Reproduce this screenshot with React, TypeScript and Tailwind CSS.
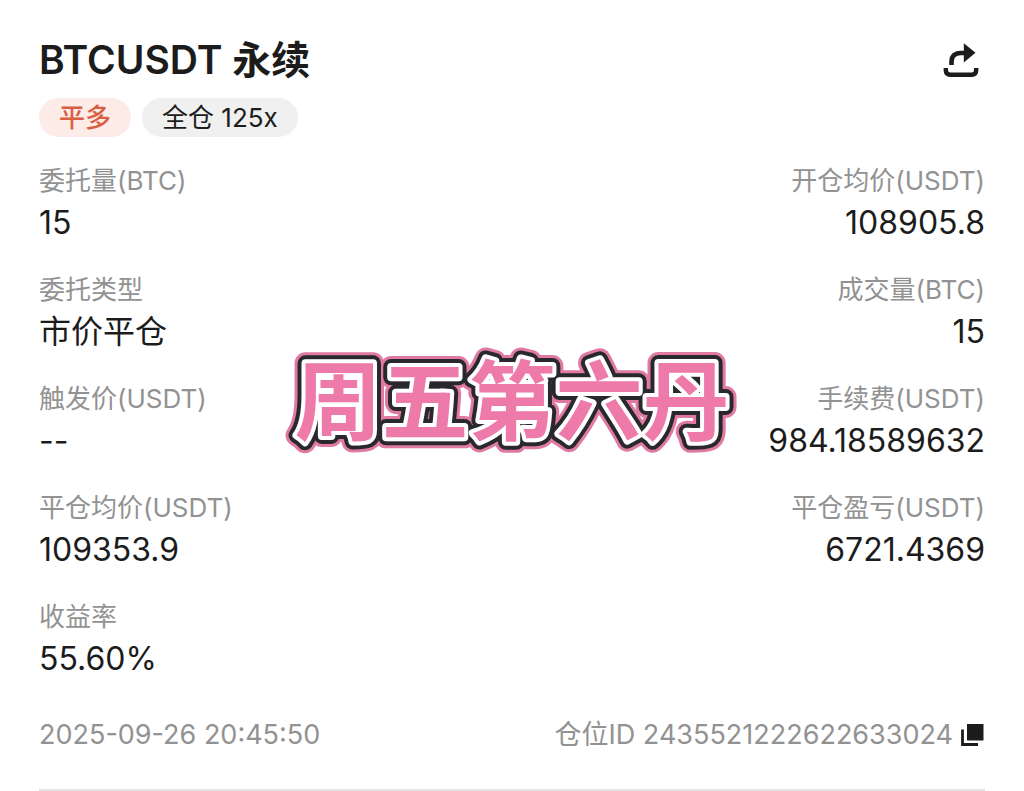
type Field = { label: string; value: string };

const rows: Field[][] = [
  [{ label: "委托量(BTC)", value: "15" }, { label: "开仓均价(USDT)", value: "108905.8" }],
  [{ label: "委托类型", value: "市价平仓" }, { label: "成交量(BTC)", value: "15" }],
  [{ label: "触发价(USDT)", value: "--" }, { label: "手续费(USDT)", value: "984.18589632" }],
  [{ label: "平仓均价(USDT)", value: "109353.9" }, { label: "平仓盈亏(USDT)", value: "6721.4369" }],
  [{ label: "收益率", value: "55.60%" }],
];

function ShareIcon() {
  return (
    <svg viewBox="0 0 36 36" className="size-9" fill="none" stroke="currentColor" aria-hidden="true">
      <path d="M8.500 23v-3c0-6 3.500-9 9-9h5" strokeWidth="4.600" />
      <path d="M20.800 1.200v19.300L32.500 10.800z" fill="currentColor" stroke="none" />
      <path d="M2.800 26v2c0 3 1.500 4.800 4.500 4.800h21.400c3 0 4.500-1.800 4.500-4.800v-2" strokeWidth="4.400" />
    </svg>
  );
}

function CopyIcon() {
  return (
    <svg viewBox="0 0 24 24" className="size-6" aria-hidden="true">
      <path d="M6 1h16.500v16.500H6z" fill="currentColor" />
      <path d="M1.500 6.500v15H17" fill="none" stroke="currentColor" strokeWidth="2.800" />
    </svg>
  );
}

function Sticker() {
  return (
    <svg
      viewBox="0 0 500 150"
      className="pointer-events-none absolute top-[326px] left-1/2 h-[150px] w-[500px] -translate-x-1/2"
      strokeLinejoin="round"
      strokeLinecap="round"
    >
      <g aria-hidden="true">
        <use href="#sticker-text" stroke="#e07aa2" strokeWidth="22" />
        <use href="#sticker-text" stroke="#29292d" strokeWidth="16" />
        <use href="#sticker-text" stroke="#ffffff" strokeWidth="8" />
      </g>
      <text
        id="sticker-text"
        x="250"
        y="108"
        textAnchor="middle"
        fill="#ee7aaa"
        className="font-['Noto_Sans_CJK_SC',sans-serif] text-[87px] font-bold"
      >
        周五第六丹
      </text>
    </svg>
  );
}

export default function App() {
  return (
    <main className="relative bg-white px-[39px] pt-9 font-['Inter','Noto_Sans_CJK_SC',sans-serif] text-[#1c1c1c]">
      <header className="flex items-center justify-between">
        <h1 className="text-[39px] leading-[48px] font-semibold">BTCUSDT 永续</h1>
        <button type="button" aria-label="分享" className="mr-1.5">
          <ShareIcon />
        </button>
      </header>

      <div className="mt-3.5 flex gap-[11px] text-[26px] leading-[39px]">
        <span className="rounded-full bg-[#fdebe8] px-5 font-medium text-[#d95f43]">平多</span>
        <span className="rounded-full bg-[#f0f0f0] px-5">全仓 125x</span>
      </div>

      <dl className="mt-[26px] flex flex-col gap-[25px]">
        {rows.map((row) => (
          <div key={row[0].label} className="flex justify-between">
            {row.map((field) => (
              <div key={field.label} className="last:not-first:text-right">
                <dt className="text-[26px] leading-9 text-[#929292]">{field.label}</dt>
                <dd className="text-[32px] leading-[48px]">{field.value}</dd>
              </div>
            ))}
          </div>
        ))}
      </dl>

      <footer className="mt-8 flex items-center justify-between border-b-2 border-[#e4e4e4] pb-[34px] text-[27px] leading-10 text-[#929292]">
        <time dateTime="2025-09-26T20:45:50">2025-09-26 20:45:50</time>
        <div className="flex items-center gap-2">
          <span>仓位ID 2435521222622633024</span>
          <button type="button" aria-label="复制仓位ID" className="text-[#1c1c1c]">
            <CopyIcon />
          </button>
        </div>
      </footer>

      <Sticker />
    </main>
  );
}
